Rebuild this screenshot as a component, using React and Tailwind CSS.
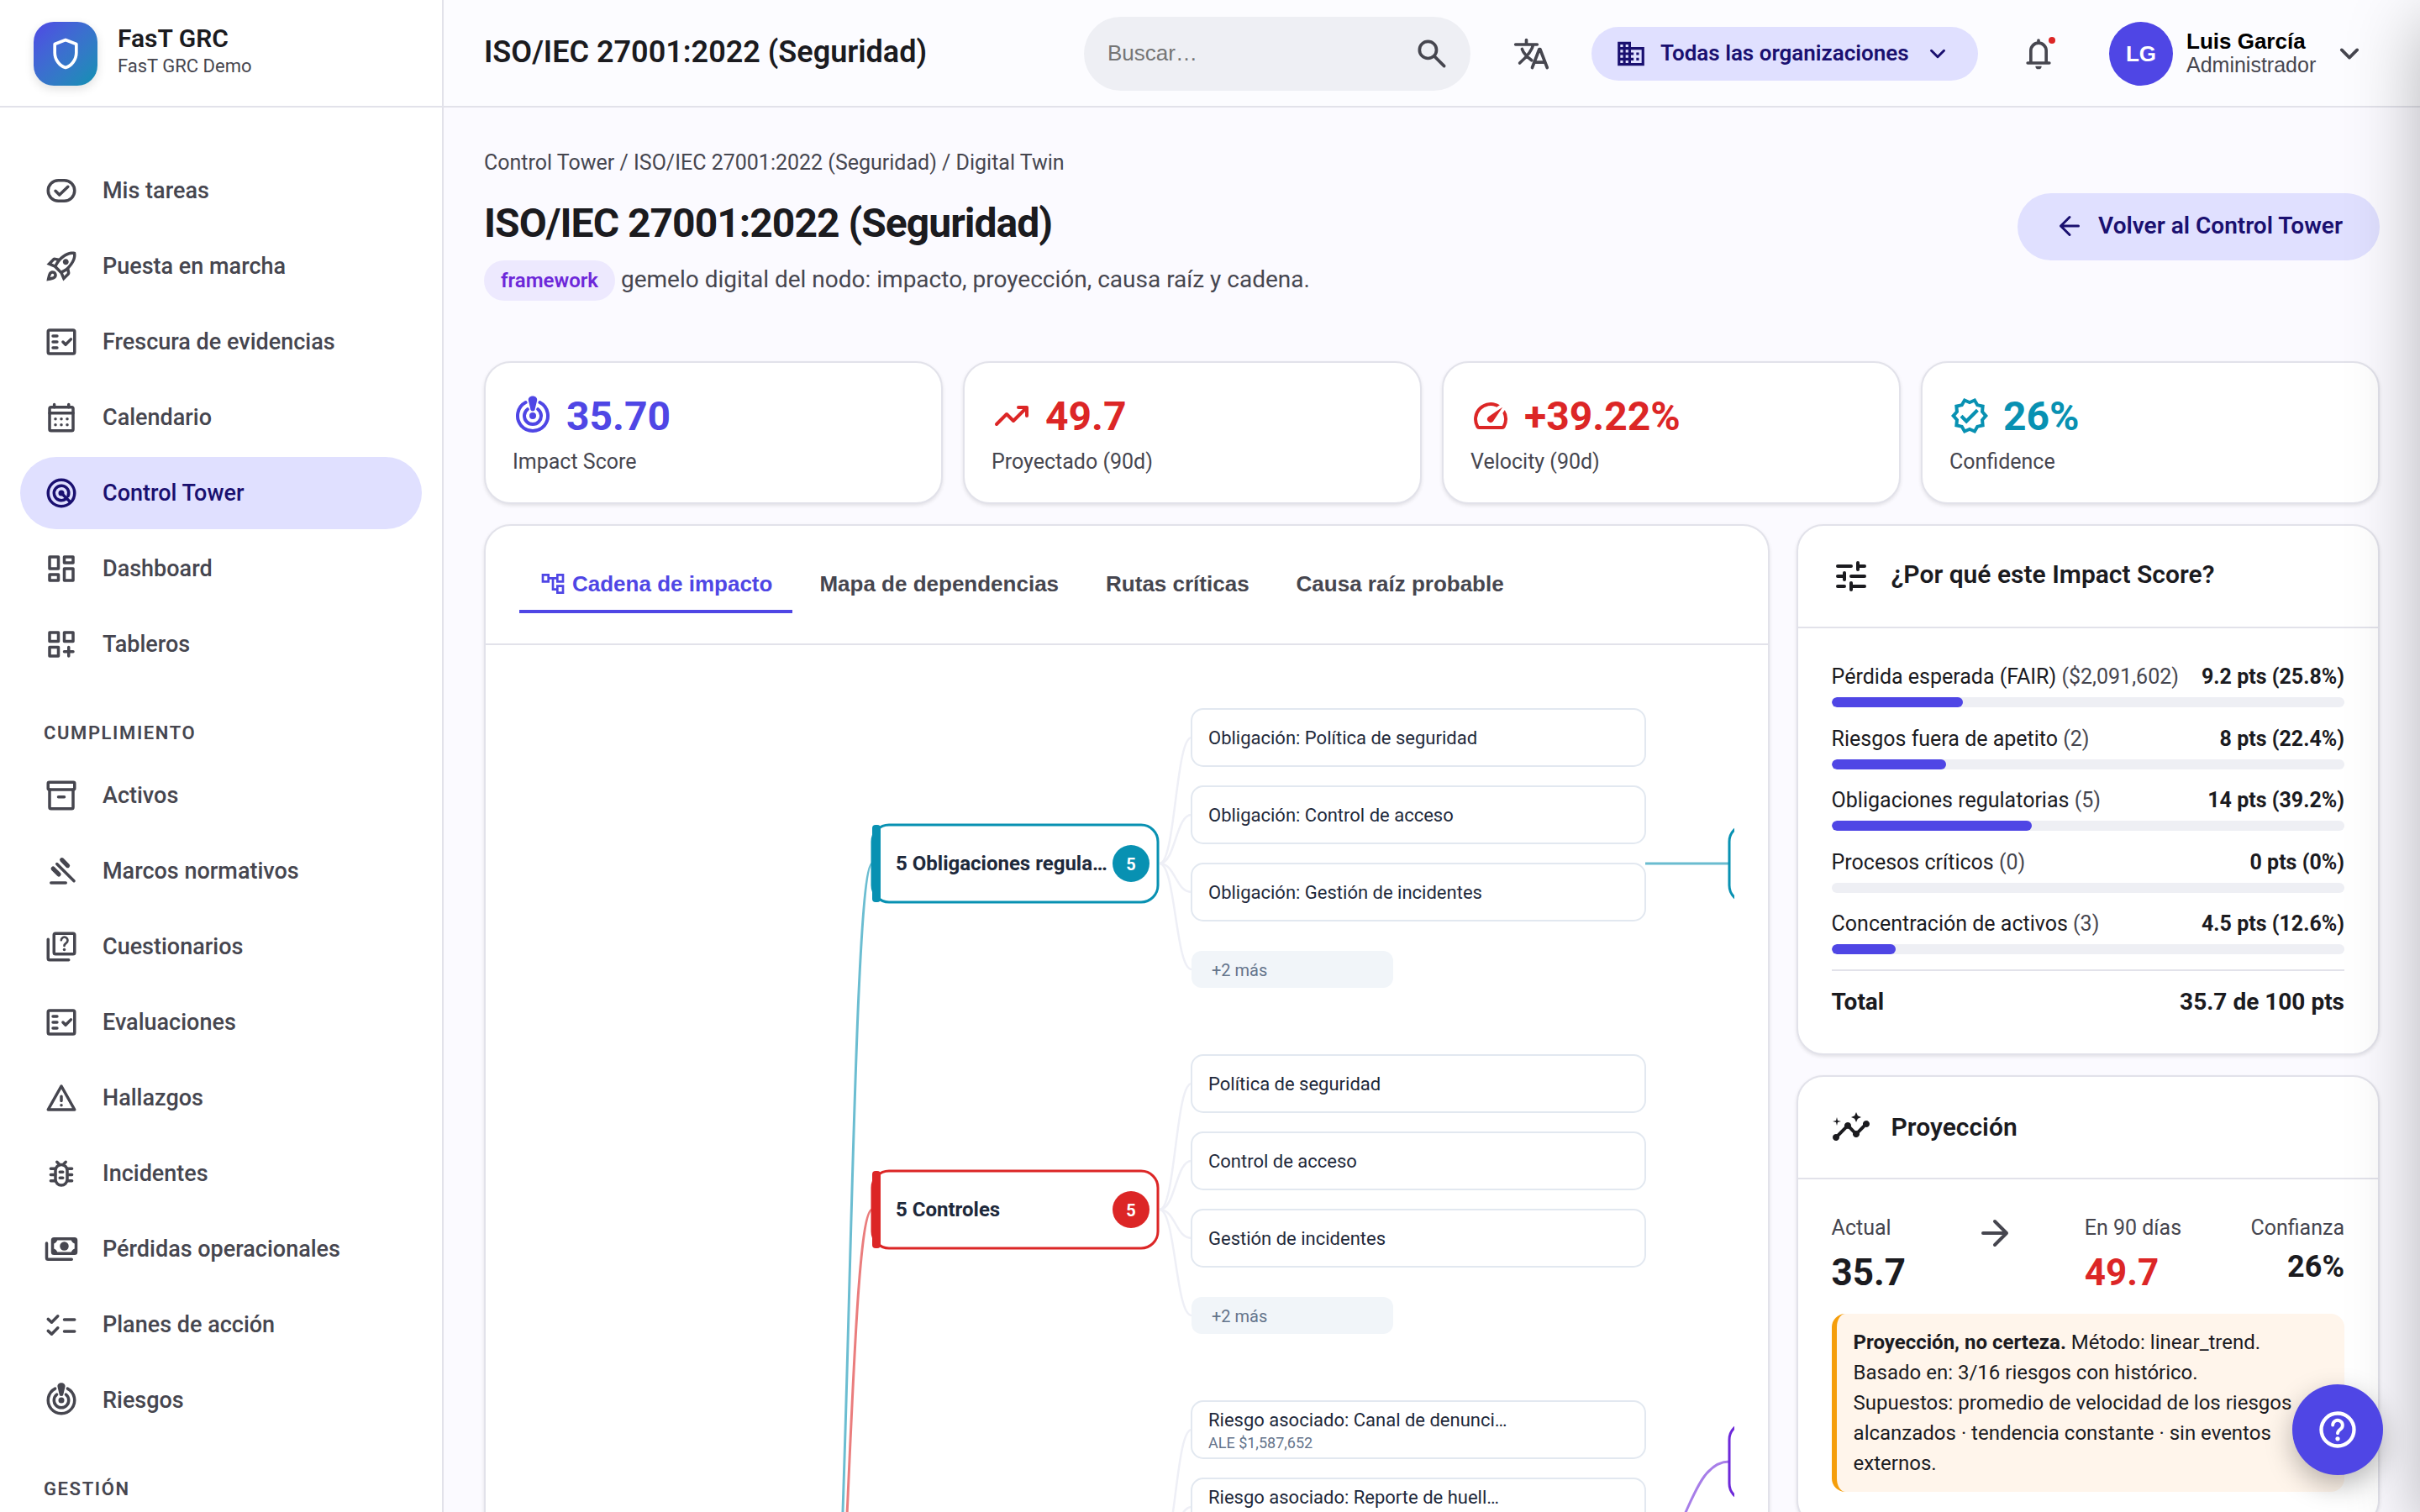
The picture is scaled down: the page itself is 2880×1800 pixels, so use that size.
import {
  MdDomain,
  MdInsights,
  MdOutlineAccountTree,
  MdOutlineRocketLaunch,
  MdOutlineVerified,
  MdSpeed,
} from "react-icons/md";

// Line icons on a 24px grid
function Icon({ size = 42, className = "", children }) {
  return (
    <svg
      width={size}
      height={size}
      viewBox="0 0 24 24"
      fill="none"
      stroke="currentColor"
      strokeWidth="2"
      strokeLinecap="round"
      strokeLinejoin="round"
      className={`shrink-0 ${className}`}
    >
      {children}
    </svg>
  );
}

const Dot = ({ x, y, r = 1 }) => (
  <circle cx={x} cy={y} r={r} fill="currentColor" stroke="none" />
);

const TaskIcon = () => (
  <Icon>
    <rect x="3" y="5" width="18" height="14" rx="7" />
    <path d="M8 12.2l2.7 2.7 5.8-5.6" />
  </Icon>
);

const FactCheckIcon = () => (
  <Icon>
    <rect x="3" y="4" width="18" height="16" rx="1" />
    <path d="M6.3 8h2.8M6.3 12h2.8M6.3 16h2.8M13.1 12l1.8 1.9 3.6-3.7" />
  </Icon>
);

const CalendarIcon = () => (
  <Icon>
    <rect x="4" y="5" width="16" height="16" rx="1" />
    <path d="M4 9h16M7.2 3.2V5M17 3.2V5" />
    <Dot x="8" y="13" />
    <Dot x="12" y="13" />
    <Dot x="16" y="13" />
    <Dot x="8" y="17" />
    <Dot x="12" y="17" />
    <Dot x="16" y="17" />
  </Icon>
);

const TowerIcon = () => (
  <Icon>
    <circle cx="12" cy="12" r="9" />
    <path d="M15 16A5 5 0 1 1 16.6 14M12 12l6 6" />
    <Dot x="12" y="12" r="2" />
  </Icon>
);

const DashboardIcon = () => (
  <Icon>
    <path d="M4 4h6v8H4zM14 4h6v4h-6zM4 16h6v4H4zM14 12h6v8h-6z" />
  </Icon>
);

const BoardsIcon = () => (
  <Icon>
    <path d="M4 4h6v6H4zM14 4h6v6h-6zM4 14h6v6H4zM17 14v6M14 17h6" />
  </Icon>
);

const ArchiveIcon = () => (
  <Icon>
    <rect x="3" y="3" width="18" height="5" rx=".8" />
    <path d="M4 8v12a1 1 0 0 0 1 1h14a1 1 0 0 0 1-1V8M10 13h4" />
  </Icon>
);

const GavelIcon = () => (
  <Icon>
    <path d="M5 20h10M9 7.2L20.6 18.7" />
    <path d="M12.4 4.4l3.9 3.9M6.4 10.3l3.9 3.9" strokeWidth="3" />
  </Icon>
);

const QuizIcon = () => (
  <Icon>
    <rect x="7" y="3" width="14" height="14" rx="1" />
    <path d="M3 7v13a1 1 0 0 0 1 1h13" />
    <path d="M11.9 7.6a2.2 2.2 0 1 1 3.4 1.9c-.8.6-1.3 1-1.3 1.9" strokeWidth="1.5" />
    <Dot x="14" y="14" />
  </Icon>
);

const WarningIcon = () => (
  <Icon>
    <path d="M12 4l9 16H3zM12 11v3" />
    <Dot x="12" y="17" />
  </Icon>
);

const BugIcon = () => (
  <Icon>
    <rect x="8" y="6" width="8" height="14" rx="4" />
    <path d="M4.8 8.7h3M4.8 12.9h3M4.8 17h3M16.2 8.7h3M16.2 12.9h3M16.2 17h3M11 11h2M11 15h2M9 4.2l1.8 1.8M15 4.2L13.2 6" />
  </Icon>
);

const PaymentsIcon = () => (
  <Icon>
    <path d="M2 8v10a1 1 0 0 0 1 1h16" />
    <rect x="6" y="5" width="16" height="10" rx="1" />
    <path
      d="M6 5h3.4A3.4 3.4 0 0 1 6 8.4zM22 5v3.4A3.4 3.4 0 0 1 18.6 5zM6 15v-3.4A3.4 3.4 0 0 1 9.4 15zM22 15h-3.4A3.4 3.4 0 0 1 22 11.6z"
      fill="currentColor"
      stroke="none"
    />
    <Dot x="14" y="10" r="3" />
  </Icon>
);

const ChecklistIcon = () => (
  <Icon>
    <path d="M3 8.2l2.4 2.2 4.2-4.2M3 16.2l2.4 2.2 4.2-4.2M14 8.5h7M14 16.5h7" />
  </Icon>
);

const CrisisIcon = ({ size }) => (
  <Icon size={size} className="overflow-visible">
    <path d="M7.8 4.05A9 9 0 1 0 16.2 4.05M8.9 8.1A5 5 0 1 0 15.1 8.1" />
    <path
      d="M12 .2c1.6 0 2.8 1.1 2.6 2.5l-1.2 5.1a1.4 1.4 0 0 1-2.8 0L9.4 2.7C9.2 1.3 10.4.2 12 .2z"
      fill="currentColor"
      stroke="none"
    />
    <Dot x="12" y="12" r="2" />
  </Icon>
);

const ChevronDown = ({ size }) => (
  <Icon size={size}>
    <path d="M7 9.5l5 5 5-5" />
  </Icon>
);

const mainNav = [
  { label: "Mis tareas", icon: <TaskIcon /> },
  { label: "Puesta en marcha", icon: <MdOutlineRocketLaunch size={42} /> },
  { label: "Frescura de evidencias", icon: <FactCheckIcon /> },
  { label: "Calendario", icon: <CalendarIcon /> },
  { label: "Control Tower", icon: <TowerIcon />, active: true },
  { label: "Dashboard", icon: <DashboardIcon /> },
  { label: "Tableros", icon: <BoardsIcon /> },
];

const complianceNav = [
  { label: "Activos", icon: <ArchiveIcon /> },
  { label: "Marcos normativos", icon: <GavelIcon /> },
  { label: "Cuestionarios", icon: <QuizIcon /> },
  { label: "Evaluaciones", icon: <FactCheckIcon /> },
  { label: "Hallazgos", icon: <WarningIcon /> },
  { label: "Incidentes", icon: <BugIcon /> },
  { label: "Pérdidas operacionales", icon: <PaymentsIcon /> },
  { label: "Planes de acción", icon: <ChecklistIcon /> },
  { label: "Riesgos", icon: <CrisisIcon size={42} /> },
];

function NavItem({ item }) {
  return (
    <a
      className={`mb-1 flex h-[86px] items-center gap-7 rounded-full px-7 text-[27px] font-medium ${
        item.active ? "bg-[#e0e0ff] text-[#1a1070]" : "text-[#46464f]"
      }`}
    >
      {item.icon}
      <span>{item.label}</span>
    </a>
  );
}

function NavLabel({ children }) {
  return (
    <div className="mt-12 mb-4 h-[30px] px-7 text-[22px] leading-[30px] font-semibold tracking-[0.073em] text-[#46464f]">
      {children}
    </div>
  );
}

function Sidebar() {
  return (
    <aside className="flex h-full w-[528px] shrink-0 flex-col border-r-2 border-[#e2e2ea] bg-white">
      <div className="flex h-32 shrink-0 items-center gap-6 border-b-2 border-[#e2e2ea] pt-0.5 pl-10">
        <div className="flex size-[76px] items-center justify-center rounded-3xl bg-linear-135 from-[#4f46e5] to-[#0891b2] text-white shadow-[0_4px_12px_rgba(0,0,0,0.12)]">
          <Icon size={44}>
            <path d="M12 3l7 2.7v5.6c0 4.5-3 8.5-7 9.7-4-1.2-7-5.2-7-9.7V5.7z" />
          </Icon>
        </div>
        <div className="pb-1.5">
          <div className="text-[30px] leading-9 font-semibold text-[#1b1b1f]">
            FasT GRC
          </div>
          <div className="text-[22px] leading-[30px] text-[#46464f]">
            FasT GRC Demo
          </div>
        </div>
      </div>

      <nav className="px-6 pt-14">
        {mainNav.map((item) => (
          <NavItem key={item.label} item={item} />
        ))}
        <NavLabel>CUMPLIMIENTO</NavLabel>
        {complianceNav.map((item) => (
          <NavItem key={item.label} item={item} />
        ))}
        <NavLabel>GESTIÓN</NavLabel>
      </nav>
    </aside>
  );
}

function Header() {
  return (
    <header className="flex h-32 shrink-0 items-center border-b-2 border-[#e2e2ea] bg-[#fcfcff] px-12 pt-0.5">
      <h2 className="flex-1 pb-1 text-[36px] font-semibold text-[#1b1b1f]">
        ISO/IEC 27001:2022 (Seguridad)
      </h2>

      <div className="flex items-center gap-8">
        <div className="flex h-[88px] w-[460px] items-center justify-between rounded-full bg-[#eeeff4] pr-6 pl-7">
          <span className="pb-0.5 font-['Liberation_Sans',sans-serif] text-[26px] text-[#757575]">
            Buscar…
          </span>
          <Icon size={44} className="text-[#46464f]">
            <path d="M14 14l6 6" />
            <circle cx="9.5" cy="9.5" r="5.5" />
          </Icon>
        </div>

        <div className="flex size-20 items-center justify-center text-[#46464f]">
          <Icon size={44}>
            <path d="M2 6h14M9 3v3M13.5 6c-.8 4-4.5 8.2-8.8 12M6.2 9c1 2.8 3.2 5 6.2 7.2M12.8 21L17.4 9h.5L22.5 21M14.6 17.5h6" />
          </Icon>
        </div>

        <button className="flex h-16 w-[460px] items-center gap-4 rounded-full bg-[#e0e0ff] pl-7 text-[#1a1070]">
          <MdDomain size={38} />
          <span className="pb-0.5 text-[26px] font-semibold">
            Todas las organizaciones
          </span>
          <ChevronDown size={36} />
        </button>

        <div className="relative flex size-20 items-center justify-center text-[#46464f]">
          <Icon size={44}>
            <path d="M7 18v-8a5 5 0 0 1 10 0v8M5 18h14M12 4.5V3.3" />
            <path
              d="M10 20h4a2 2 0 0 1-4 0z"
              fill="currentColor"
              stroke="none"
            />
          </Icon>
          <span className="absolute top-5 right-5 size-2 rounded-full bg-[#dc2626]" />
        </div>

        <div className="flex w-[334px] items-center pl-3 font-['Liberation_Sans',sans-serif]">
          <span className="flex size-[76px] items-center justify-center rounded-full bg-[#4f46e5] text-[26px] font-bold text-white">
            LG
          </span>
          <div className="ml-4 flex-1 pb-0.5 whitespace-nowrap">
            <div className="text-[26px] leading-7 font-bold text-black">
              Luis García
            </div>
            <div className="text-[25px] leading-7 text-[#46464f]">
              Administrador
            </div>
          </div>
          <div className="mr-[14px] text-[#46464f]">
            <ChevronDown size={44} />
          </div>
        </div>
      </div>
    </header>
  );
}

const stats = [
  {
    label: "Impact Score",
    value: "35.70",
    color: "text-[#4f46e5]",
    icon: <CrisisIcon size={48} />,
  },
  {
    label: "Proyectado (90d)",
    value: "49.7",
    color: "text-[#dc2626]",
    icon: (
      <Icon size={48}>
        <path d="M3 17l6-6 4 4 7.5-7.5M16 7h5v5" />
      </Icon>
    ),
  },
  {
    label: "Velocity (90d)",
    value: "+39.22%",
    color: "text-[#dc2626]",
    icon: <MdSpeed size={48} />,
  },
  {
    label: "Confidence",
    value: "26%",
    color: "text-[#0891b2]",
    icon: <MdOutlineVerified size={48} />,
  },
];

function StatCard({ stat }) {
  return (
    <div className="h-[170px] rounded-[32px] border-2 border-[#e2e2ea] bg-white px-8 pt-8 shadow-[0_2px_4px_rgba(0,0,0,0.1)]">
      <div
        className={`flex h-[62px] items-center gap-4 text-[48px] font-bold ${stat.color}`}
      >
        {stat.icon}
        <span className="pt-0.5">{stat.value}</span>
      </div>
      <div className="mt-[5px] text-[25px] leading-[38px] text-[#46464f]">
        {stat.label}
      </div>
    </div>
  );
}

const tabs = ["Mapa de dependencias", "Rutas críticas", "Causa raíz probable"];

const groups = [
  {
    y: 844,
    title: "5 Obligaciones regula…",
    color: "#0891b2",
    items: [
      { label: "Obligación: Política de seguridad" },
      { label: "Obligación: Control de acceso" },
      { label: "Obligación: Gestión de incidentes" },
    ],
  },
  {
    y: 1256,
    title: "5 Controles",
    color: "#dc2626",
    items: [
      { label: "Política de seguridad" },
      { label: "Control de acceso" },
      { label: "Gestión de incidentes" },
    ],
  },
  {
    y: 1668,
    twoLines: true,
    items: [
      { label: "Riesgo asociado: Canal de denunci…", sub: "ALE $1,587,652" },
      { label: "Riesgo asociado: Reporte de huell…" },
    ],
  },
];

const ROOT_Y = 2058;

function curve(x1, y1, x2, y2) {
  const mid = (x1 + x2) / 2;
  return `M${x1} ${y1}C${mid} ${y1} ${mid} ${y2} ${x2} ${y2}`;
}

function ImpactGroup({ group }) {
  const center = group.y + 184;

  return (
    <g>
      {[34, 126, 218, 310].map((offset) => (
        <path
          key={offset}
          d={curve(1380, center, 1418, group.y + offset)}
          fill="none"
          stroke="#eeeff6"
          strokeWidth="2.5"
        />
      ))}

      {group.title && (
        <>
          <path
            d={curve(983, ROOT_Y, 1038, center)}
            fill="none"
            stroke={group.color}
            strokeWidth="3"
            opacity="0.6"
          />
          <rect
            x="1038"
            y={center - 46}
            width="340"
            height="92"
            rx="20"
            fill="#fff"
            stroke={group.color}
            strokeWidth="3"
          />
          <rect
            x="1038"
            y={center - 46}
            width="10"
            height="92"
            rx="4"
            fill={group.color}
          />
          <text
            x="1066"
            y={center + 8}
            fontSize="24"
            fontWeight="700"
            fill="#1e293b"
          >
            {group.title}
          </text>
          <circle cx="1346" cy={center} r="22" fill={group.color} />
          <text
            x="1346"
            y={center + 8}
            fontSize="20"
            fontWeight="700"
            fill="#fff"
            textAnchor="middle"
          >
            5
          </text>
        </>
      )}

      {group.items.map((item, i) => (
        <g key={item.label}>
          <rect
            x="1418"
            y={group.y + i * 92}
            width="540"
            height="68"
            rx="14"
            fill="#fff"
            stroke="#e2e8f0"
            strokeWidth="2"
          />
          <text
            x="1438"
            y={group.y + i * 92 + (group.twoLines ? 30 : 42)}
            fontSize="22"
            fill="#1e293b"
          >
            {item.label}
          </text>
          {item.sub && (
            <text
              x="1438"
              y={group.y + i * 92 + 56}
              fontSize="18"
              fill="#64748b"
            >
              {item.sub}
            </text>
          )}
        </g>
      ))}

      {!group.twoLines && (
        <>
          <rect
            x="1418"
            y={group.y + 288}
            width="240"
            height="44"
            rx="12"
            fill="#f1f5f9"
          />
          <text x="1442" y={group.y + 317.5} fontSize="20" fill="#64748b">
            +2 más
          </text>
        </>
      )}
    </g>
  );
}

function ImpactChain() {
  return (
    <svg
      width="1446"
      height="1000"
      viewBox="618 808 1446 1000"
      className="block"
    >
      {groups.map((group) => (
        <ImpactGroup key={group.y} group={group} />
      ))}

      {/* Next level, scrolled out to the right */}
      <path d="M1958 1028H2058" stroke="#0891b2" strokeWidth="3" opacity="0.6" />
      <path
        d={curve(1958, 1852, 2058, 1740)}
        fill="none"
        stroke="#6d28d9"
        strokeWidth="3"
        opacity="0.6"
      />
      <rect
        x="2058"
        y="982"
        width="340"
        height="92"
        rx="20"
        fill="#fff"
        stroke="#0891b2"
        strokeWidth="3"
      />
      <rect
        x="2058"
        y="1694"
        width="340"
        height="92"
        rx="20"
        fill="#fff"
        stroke="#6d28d9"
        strokeWidth="3"
      />
    </svg>
  );
}

function ChainPanel() {
  return (
    <section className="w-[1529.6px] shrink-0 overflow-hidden rounded-[32px] border-2 border-[#e2e2ea] bg-white shadow-[0_2px_4px_rgba(0,0,0,0.1)]">
      <div className="flex h-[142px] items-start gap-2 border-b-2 border-[#e2e2ea] px-10 pt-9 font-['Liberation_Sans',sans-serif] text-[26px] font-bold text-[#46464f]">
        <button className="flex h-[68px] items-center gap-[7px] border-b-4 border-[#4f46e5] px-6 pt-0.5 text-[#4f46e5]">
          <MdOutlineAccountTree size={32} />
          Cadena de impacto
        </button>
        {tabs.map((tab) => (
          <button key={tab} className="h-[68px] px-6 pb-0.5">
            {tab}
          </button>
        ))}
      </div>
      <div className="p-10">
        <ImpactChain />
      </div>
    </section>
  );
}

function PanelHeader({ icon, title, titleClass = "pb-1" }) {
  return (
    <div className="flex h-[122px] items-center gap-6 border-b-2 border-[#e2e2ea] px-[39px]">
      {icon}
      <h3 className={`text-[30px] font-semibold ${titleClass}`}>{title}</h3>
    </div>
  );
}

const factors = [
  {
    label: "Pérdida esperada (FAIR)",
    detail: "($2,091,602)",
    value: "9.2 pts (25.8%)",
    width: 25.7,
  },
  {
    label: "Riesgos fuera de apetito",
    detail: "(2)",
    value: "8 pts (22.4%)",
    width: 22.4,
  },
  {
    label: "Obligaciones regulatorias",
    detail: "(5)",
    value: "14 pts (39.2%)",
    width: 39,
  },
  {
    label: "Procesos críticos",
    detail: "(0)",
    value: "0 pts (0%)",
    width: 0,
  },
  {
    label: "Concentración de activos",
    detail: "(3)",
    value: "4.5 pts (12.6%)",
    width: 12.5,
  },
];

function ScorePanel() {
  return (
    <section className="h-[632px] rounded-[32px] border-2 border-[#e2e2ea] bg-white text-[#1b1b1f] shadow-[0_2px_4px_rgba(0,0,0,0.1)]">
      <PanelHeader
        title="¿Por qué este Impact Score?"
        titleClass="pb-1.5"
        icon={
          <Icon size={48}>
            <path d="M4 6h8M16 4v4M16 6h4M4 12h4M8 10v4M12 12h8M4 18h4M12 16v4M12 18h8" />
          </Icon>
        }
      />
      <div className="px-10 pt-10 text-[25px]">
        {factors.map((factor) => (
          <div key={factor.label} className="h-[73.5px]">
            <div className="flex justify-between leading-[35px] whitespace-nowrap">
              <span>
                {factor.label}{" "}
                <span className="text-[#46464f]">{factor.detail}</span>
              </span>
              <span className="font-bold">{factor.value}</span>
            </div>
            <div className="mt-[7px] h-3 overflow-hidden rounded-full bg-[#eeeff4]">
              <div
                className="h-full rounded-full bg-[#4f46e5]"
                style={{ width: `${factor.width}%` }}
              />
            </div>
          </div>
        ))}
      </div>
      <div className="mx-10 -mt-[1.5px] flex justify-between border-t-2 border-[#e2e2ea] pt-4 text-[28px] leading-[42px] font-bold">
        <span>Total</span>
        <span>35.7 de 100 pts</span>
      </div>
    </section>
  );
}

function ProjectionPanel() {
  return (
    <section className="h-[538px] shrink-0 rounded-[32px] border-2 border-[#e2e2ea] bg-white text-[#1b1b1f] shadow-[0_2px_4px_rgba(0,0,0,0.1)]">
      <PanelHeader
        title="Proyección"
        titleClass="pb-0.5"
        icon={<MdInsights size={48} />}
      />
      <div className="p-10">
        <div className="flex h-[120px] items-start justify-between text-[25px] leading-[35px] text-[#46464f]">
          <div>
            Actual
            <div className="mt-[3px] text-[44px] leading-[66px] font-bold text-[#1b1b1f]">
              35.7
            </div>
          </div>
          <Icon size={48}>
            <path d="M5 12h14M12 5l7 7-7 7" />
          </Icon>
          <div>
            En 90 días
            <div className="mt-[3px] text-[44px] leading-[66px] font-bold text-[#dc2626]">
              49.7
            </div>
          </div>
          <div className="text-right">
            Confianza
            <div className="mt-0.5 text-[36px] leading-[54px] font-bold text-[#1b1b1f]">
              26%
            </div>
          </div>
        </div>

        <div className="rounded-2xl border-l-[6px] border-[#f59e0b] bg-[#fff5eb] px-5 py-4 text-[24px] leading-9">
          <strong className="font-bold">Proyección, no certeza.</strong> Método:
          linear_trend.
          <br />
          Basado en: 3/16 riesgos con histórico.
          <br />
          Supuestos: promedio de velocidad de los riesgos
          <br />
          alcanzados · tendencia constante · sin eventos
          <br />
          externos.
        </div>
      </div>
    </section>
  );
}

export default function App() {
  return (
    <div className="relative flex h-[1800px] w-[2880px] overflow-hidden bg-[#fbfaff] font-['Roboto',sans-serif]">
      <Sidebar />

      <div className="flex min-w-0 flex-1 flex-col">
        <Header />

        <main className="min-h-0 flex-1 overflow-hidden px-12 pt-[47px]">
          <div className="text-[25px] leading-[38px] text-[#46464f]">
            Control Tower / ISO/IEC 27001:2022 (Seguridad) / Digital Twin
          </div>

          {/* Page title */}
          <div className="mt-[17px] flex h-[200px] items-start justify-between">
            <div className="pt-[7px]">
              <h1 className="text-[48px] leading-[58px] font-bold tracking-[-0.0205em] text-[#1b1b1f]">
                ISO/IEC 27001:2022 (Seguridad)
              </h1>
              <p className="mt-[14px] text-[28px] leading-[48px] text-[#46464f]">
                <span className="inline-block rounded-full bg-[#ede9fe] px-5 py-1.5 text-[24px] leading-9 font-semibold text-[#6d28d9]">
                  framework
                </span>{" "}
                gemelo digital del nodo: impacto, proyección, causa raíz y
                cadena.
              </p>
            </div>
            <button className="flex h-20 items-center gap-4 rounded-full bg-[#e0e0ff] px-11 pb-0.5 text-[28px] font-semibold text-[#1a1070]">
              <Icon size={36}>
                <path d="M19 12H5M12 5l-7 7 7 7" />
              </Icon>
              Volver al Control Tower
            </button>
          </div>

          <div className="grid grid-cols-4 gap-6">
            {stats.map((stat) => (
              <StatCard key={stat.label} stat={stat} />
            ))}
          </div>

          <div className="mt-6 flex items-start gap-8">
            <ChainPanel />
            <div className="flex flex-1 flex-col gap-6">
              <ScorePanel />
              <ProjectionPanel />
            </div>
          </div>
        </main>
      </div>

      {/* Closed drawer, only its shadow reaches the page */}
      <div className="absolute top-0 left-full h-full w-[800px] shadow-[0_24px_80px_rgba(0,0,0,0.28)]" />

      <button className="absolute right-11 bottom-11 flex size-[108px] items-center justify-center rounded-full bg-[#4f46e5] text-white shadow-[0_12px_32px_rgba(0,0,0,0.28)]">
        <Icon size={52}>
          <circle cx="12" cy="12" r="9" />
          <path d="M9.3 9.5a2.7 2.7 0 1 1 4.3 2.2c-.9.7-1.6 1.2-1.6 2.3" strokeWidth="1.8" />
          <Dot x="12" y="17" r="1.2" />
        </Icon>
      </button>
    </div>
  );
}
